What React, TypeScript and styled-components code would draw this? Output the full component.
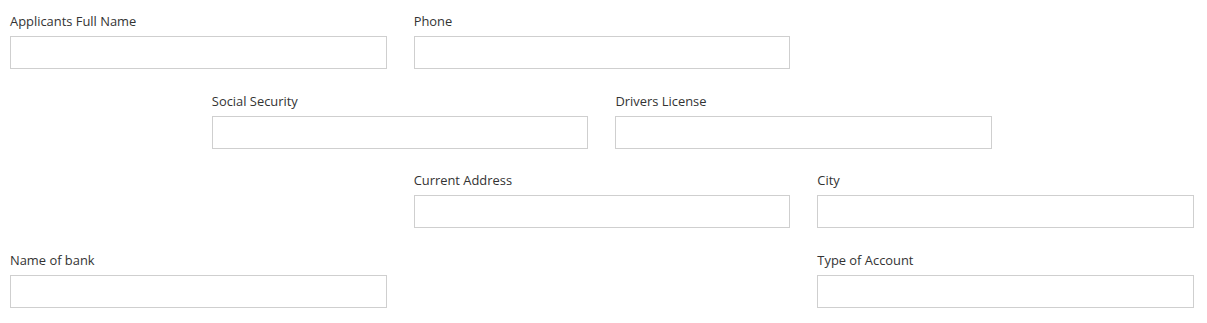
import styled, { createGlobalStyle } from 'styled-components';

const GlobalStyle = createGlobalStyle`
  body {
    margin: 0;
    background: #fff;
    font-family: 'Open Sans', 'Noto Sans', Arial, sans-serif;
  }
`;

const Form = styled.form`
  display: grid;
  grid-template-columns: repeat(6, 1fr);
  column-gap: 27px;
  row-gap: 22.67px;
  padding: 12px 13px 0 10px;
`;

const Field = styled.div<{ $col: number }>`
  grid-column: ${(p) => p.$col} / span 2;
  display: flex;
  flex-direction: column;
`;

const FieldRow = styled.div`
  display: contents;
`;

const Label = styled.label`
  font-size: 12.9px;
  line-height: 19px;
  color: #333;
  margin-bottom: 5px;
`;

const Input = styled.input`
  box-sizing: border-box;
  height: 33px;
  width: 100%;
  border: 1px solid #cfcfcf;
  background: #fff;
  padding: 4px 8px;
  font: inherit;
  outline: none;
`;

type FieldDef = { label: string; col: number };

const rows: FieldDef[][] = [
  [
    { label: 'Applicants Full Name', col: 1 },
    { label: 'Phone', col: 3 },
  ],
  [
    { label: 'Social Security', col: 2 },
    { label: 'Drivers License', col: 4 },
  ],
  [
    { label: 'Current Address', col: 3 },
    { label: 'City', col: 5 },
  ],
  [
    { label: 'Name of bank', col: 1 },
    { label: 'Type of Account', col: 5 },
  ],
];

const App = () => {
  return (
    <>
      <GlobalStyle />
      <Form>
        {rows.map((row, i) => (
          <FieldRow key={i}>
            {row.map((f) => (
              <Field key={f.label} $col={f.col} style={{ gridRow: i + 1 }}>
                <Label>{f.label}</Label>
                <Input type='text' />
              </Field>
            ))}
          </FieldRow>
        ))}
      </Form>
    </>
  );
};

export default App;
